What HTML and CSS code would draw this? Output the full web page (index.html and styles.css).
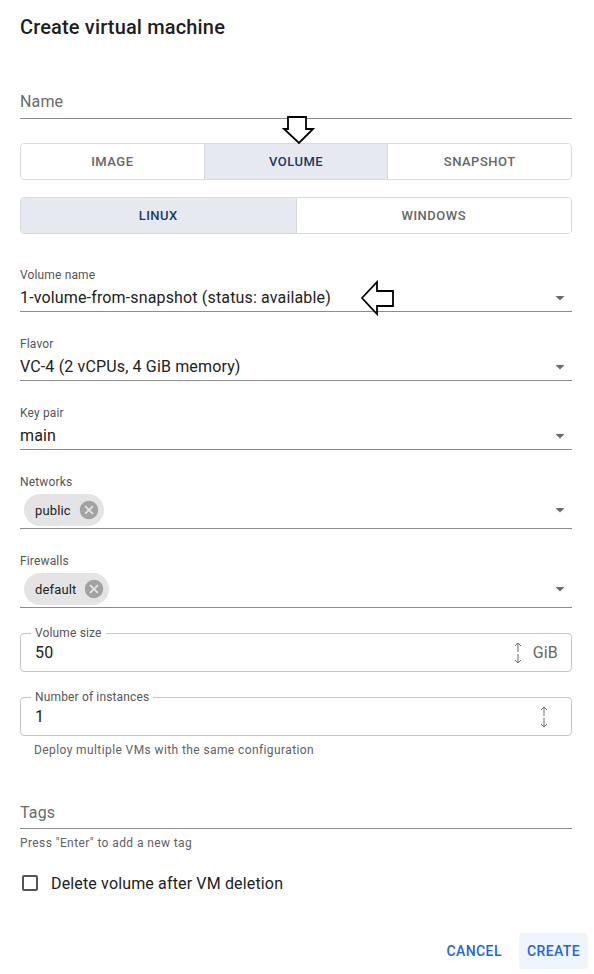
FILE: index.html
```html
<!DOCTYPE html>
<html>
<head>
<meta charset="utf-8">
<link rel="stylesheet" href="styles.css">
</head>
<body>
<div class="page">
  <div class="dialog">
    <h1 class="title">Create virtual machine</h1>

    <div class="text-field name-field"><span class="placeholder">Name</span></div>

    <div class="toggle-group three">
      <button class="toggle">IMAGE</button>
      <button class="toggle selected">VOLUME</button>
      <button class="toggle">SNAPSHOT</button>
    </div>

    <div class="toggle-group two">
      <button class="toggle selected">LINUX</button>
      <button class="toggle">WINDOWS</button>
    </div>

    <div class="select first">
      <div class="label">Volume name</div>
      <div class="row"><span class="value">1-volume-from-snapshot (status: available)</span><svg class="drop" viewBox="0 0 24 24"><path d="M7.5 10l4.5 4.5 4.5-4.5z"/></svg></div>
    </div>

    <div class="select">
      <div class="label">Flavor</div>
      <div class="row"><span class="value">VC-4 (2 vCPUs, 4 GiB memory)</span><svg class="drop" viewBox="0 0 24 24"><path d="M7.5 10l4.5 4.5 4.5-4.5z"/></svg></div>
    </div>

    <div class="select">
      <div class="label">Key pair</div>
      <div class="row"><span class="value">main</span><svg class="drop" viewBox="0 0 24 24"><path d="M7.5 10l4.5 4.5 4.5-4.5z"/></svg></div>
    </div>

    <div class="select chips">
      <div class="label">Networks</div>
      <div class="chip-row">
        <span class="chip">public<svg class="chip-del" viewBox="0 0 24 24"><path d="M12 2C6.47 2 2 6.470 2 12s4.47 10 10 10 10-4.47 10-10S17.53 2 12 2zm5 13.59L15.59 17 12 13.41 8.41 17 7 15.590 10.59 12 7 8.410 8.41 7 12 10.590 15.59 7 17 8.410 13.41 12 17 15.590z"/></svg></span>
        <svg class="drop" viewBox="0 0 24 24"><path d="M7.5 10l4.5 4.5 4.5-4.5z"/></svg>
      </div>
    </div>

    <div class="select chips">
      <div class="label">Firewalls</div>
      <div class="chip-row">
        <span class="chip">default<svg class="chip-del" viewBox="0 0 24 24"><path d="M12 2C6.47 2 2 6.470 2 12s4.47 10 10 10 10-4.47 10-10S17.53 2 12 2zm5 13.59L15.59 17 12 13.41 8.41 17 7 15.590 10.59 12 7 8.410 8.41 7 12 10.590 15.59 7 17 8.410 13.41 12 17 15.590z"/></svg></span>
        <svg class="drop" viewBox="0 0 24 24"><path d="M7.5 10l4.5 4.5 4.5-4.5z"/></svg>
      </div>
    </div>

    <fieldset class="outlined first-outlined">
      <legend>Volume size</legend>
      <div class="out-row">
        <span class="out-value">50</span>
        <svg class="stepper" viewBox="0 0 10 24"><path d="M5 2V11M2 5L5 2 8 5M5 13V22M2 19L5 22 8 19"/></svg>
        <span class="unit">GiB</span>
      </div>
    </fieldset>

    <fieldset class="outlined second-outlined">
      <legend>Number of instances</legend>
      <div class="out-row">
        <span class="out-value">1</span>
        <svg class="stepper solo" viewBox="0 0 10 24"><path d="M5 2V11M2 5L5 2 8 5M5 13V22M2 19L5 22 8 19"/></svg>
      </div>
    </fieldset>
    <div class="helper indented">Deploy multiple VMs with the same configuration</div>

    <div class="text-field tags-field"><span class="placeholder">Tags</span></div>
    <div class="helper tags-helper">Press "Enter" to add a new tag</div>

    <label class="check-row"><span class="checkbox"></span><span class="check-label">Delete volume after VM deletion</span></label>
  </div>

  <div class="actions">
    <button class="btn">CANCEL</button>
    <button class="btn primary">CREATE</button>
  </div>

  <svg class="annot arrow-down" viewBox="0 0 34 32"><path d="M7 2H25V14H32L18 28 3 14H7Z"/></svg>
  <svg class="annot arrow-left" viewBox="0 0 37 40"><path d="M3 20L18 4V13H34V28H18V36Z"/></svg>
</div>
</body>
</html>
```

FILE: styles.css
```css
* { box-sizing: border-box; }
html, body { margin: 0; padding: 0; background: #fff; }
body { font-family: Roboto, "Noto Sans", "Liberation Sans", sans-serif; color: #212121; }

.page { position: relative; width: 594px; height: 974px; overflow: hidden; }

.dialog { padding: 15px 22px 0 20px; }

.title { margin: 0; font-size: 20px; line-height: 24px; font-weight: 500; color: #1f1f1f; letter-spacing: 0.15px; }

.text-field { border-bottom: 1px solid #8c8c8c; }
.text-field .placeholder { display: block; font-size: 16px; line-height: 20px; color: #6a6a6a; letter-spacing: 0.15px; }
.name-field { margin-top: 53px; padding-bottom: 6px; }

.toggle-group { display: flex; height: 37px; border: 1px solid #d6d9de; border-radius: 4px; overflow: hidden; }
.toggle-group.three { margin-top: 24px; }
.toggle-group.two { margin-top: 17px; }
.toggle { flex: 1; border: 0; border-left: 1px solid #d6d9de; background: #fff; font-family: inherit; font-size: 13px; font-weight: 500; letter-spacing: 0.5px; color: #666; padding: 0; }
.toggle:first-child { border-left: 0; }
.toggle.selected { background: #e6eaf0; color: #1c3866; }

.select { margin-top: 25px; border-bottom: 1px solid #8c8c8c; padding-bottom: 1px; }
.select.first { margin-top: 34px; }
.label { font-size: 12px; line-height: 14px; color: #555; letter-spacing: 0.15px; }
.row { margin-top: 4px; height: 24px; display: flex; align-items: center; }
.value { flex: 1; font-size: 16px; line-height: 20px; color: #212121; letter-spacing: 0.15px; }
.drop { width: 24px; height: 24px; fill: #6b6b6b; }

.select.chips { padding-bottom: 2px; }
.chip-row { margin-top: 5px; display: flex; align-items: center; height: 32px; }
.chip-row .drop { margin-left: auto; }
.chip { display: inline-flex; align-items: center; height: 32px; border-radius: 16px; background: #e4e4e4; padding-left: 11px; margin-left: 4px; font-size: 13px; color: #222; letter-spacing: 0.15px; }
.chip-del { width: 22px; height: 22px; fill: #a2a2a2; margin: 0 4px 0 7px; }

.outlined { margin: 0; border: 1px solid #c6c6c6; border-radius: 4px; padding: 0 13px 6px 14px; min-width: 0; }
.outlined legend { font-size: 12px; line-height: 14px; color: #555; padding: 0 4px; margin-left: -4px; letter-spacing: 0.15px; }
.first-outlined { margin-top: 18px; }
.second-outlined { margin-top: 18px; }
.out-row { height: 25px; display: flex; align-items: center; }
.out-value { flex: 1; font-size: 16px; line-height: 20px; color: #212121; letter-spacing: 0.15px; }
.stepper { width: 10px; height: 24px; fill: none; stroke: #6b6b6b; stroke-width: 1; }
.stepper.solo { margin-right: 9px; }
.unit { margin-left: 10px; font-size: 16px; color: #666; letter-spacing: 0.15px; }

.helper { font-size: 12px; line-height: 14px; color: #616161; letter-spacing: 0.4px; }
.helper.indented { margin-top: 7px; padding-left: 14px; }

.tags-field { margin-top: 46px; padding-bottom: 5px; }
.tags-helper { margin-top: 7px; }

.check-row { display: flex; align-items: center; margin-top: 23px; height: 20px; padding-left: 2px; }
.checkbox { width: 16px; height: 16px; border: 2px solid #555; border-radius: 2px; }
.check-label { margin-left: 13px; font-size: 16px; color: #212121; letter-spacing: 0.15px; }

.actions { display: flex; justify-content: flex-end; gap: 9px; padding: 40px 6px 0 0; }
.btn { height: 36px; padding: 0 8px; border: 0; border-radius: 4px; background: transparent; font-family: inherit; font-size: 14px; font-weight: 500; letter-spacing: 0.4px; color: #1f66d8; }
.btn.primary { background: #f0f5fd; }

.annot { position: absolute; fill: #fff; stroke: #000; stroke-width: 1.8; stroke-linejoin: miter; }
.arrow-down { left: 281px; top: 115px; width: 34px; height: 32px; }
.arrow-left { left: 359px; top: 278px; width: 37px; height: 40px; }
```
